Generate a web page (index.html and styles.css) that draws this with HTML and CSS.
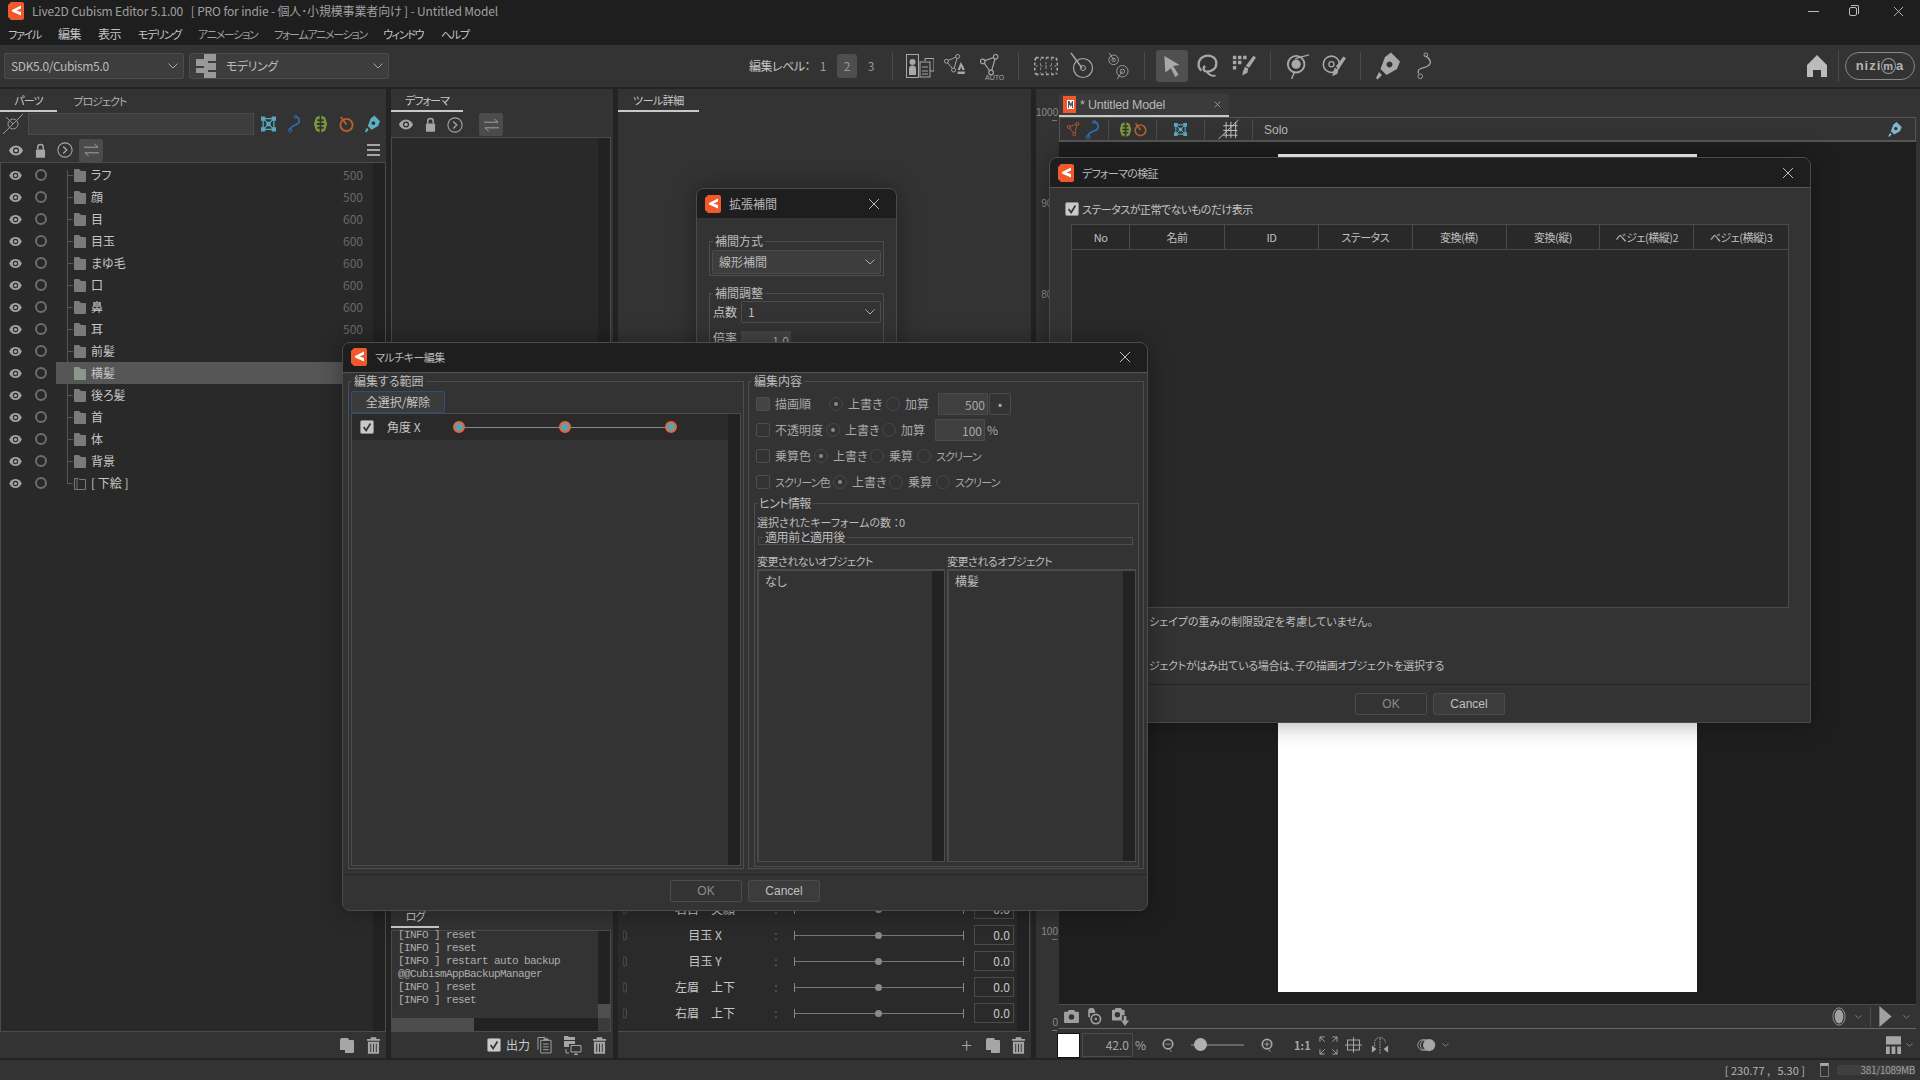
FILE: index.html

```html
<!DOCTYPE html>
<html lang="ja">
<head>
<title>Live2D Cubism Editor</title>
<meta charset="utf-8"/>
<link rel="stylesheet" href="styles.css">
</head>
<body>

<!-- icon set -->
<svg class="defs" xmlns="http://www.w3.org/2000/svg">
  <symbol id="i-logo" viewBox="0 0 16 18"><path fill="#f0592b" d="M3 0h11a2 2 0 0 1 2 2v14a2 2 0 0 1-2 2H3l-3-3V3z"/><path fill="#fff" d="M13 3.500v3L8.500 8.500 13 10v3.500L4 9.500V8z"/></symbol>
  <symbol id="i-doclogo" viewBox="0 0 13 17"><path fill="#f0592b" d="M0 0h13v17H0z"/><path fill="#fff" d="M4 4h7v9H4z"/><path fill="#555" d="M5 5h1.500L8 8l1-3h1v7H9V8.500L8 11 6 8.500V12H5z"/></symbol>
  <symbol id="i-x" viewBox="0 0 12 12"><path fill="none" stroke="currentColor" d="M1 1l10 10M11 1L1 11"/></symbol>
  <symbol id="i-chev" viewBox="0 0 10 6"><path fill="none" stroke="currentColor" d="M.5.5L5 5 9.500.5"/></symbol>
  <symbol id="i-eye" viewBox="0 0 14 10"><path fill="currentColor" d="M7 0c3.400 0 5.800 2.400 7 5-1.200 2.600-3.600 5-7 5S1.200 7.600 0 5c1.200-2.600 3.600-5 7-5z"/><circle cx="7" cy="5" r="3" fill="#2a2a2a"/><circle cx="7" cy="5" r="1.800" fill="currentColor"/></symbol>
  <symbol id="i-lock" viewBox="0 0 12 16"><path fill="none" stroke="currentColor" stroke-width="1.600" d="M3 7V4.500a3 3 0 0 1 6 0V7"/><rect x="1" y="7" width="10" height="9" rx="1" fill="currentColor"/></symbol>
  <symbol id="i-next" viewBox="0 0 18 18"><circle cx="9" cy="9" r="8" fill="none" stroke="currentColor" stroke-width="1.200"/><path fill="none" stroke="currentColor" stroke-width="1.500" d="M7 5l4 4-4 4"/></symbol>
  <symbol id="i-swap" viewBox="0 0 16 14"><path fill="none" stroke="currentColor" d="M0 4h15M11 .5L15 4M16 10H1M5 13.500L1 10"/></symbol>
  <symbol id="i-menu" viewBox="0 0 13 12"><path fill="none" stroke="currentColor" stroke-width="2" d="M0 1h13M0 6h13M0 11h13"/></symbol>
  <symbol id="i-folder" viewBox="0 0 12 13"><path fill="currentColor" d="M1 0h4l2 2h4a1 1 0 0 1 1 1v9a1 1 0 0 1-1 1H1a1 1 0 0 1-1-1V1a1 1 0 0 1 1-1z"/></symbol>
  <symbol id="i-folder-o" viewBox="0 0 12 13"><path fill="none" stroke="currentColor" d="M.5 1.500h4l1 1h6v10H.5zM3 2v10"/></symbol>
  <symbol id="i-trash" viewBox="0 0 14 18"><path fill="currentColor" d="M4 0h6v2h4v2H0V2h4zM1 5h12v13H1zM3.500 7v9h1V7zm3 0v9h1V7zm3 0v9h1V7z"/></symbol>
  <symbol id="i-copy" viewBox="0 0 14 15"><path fill="currentColor" d="M2 0h6l1 2h4a1 1 0 0 1 1 1v11a1 1 0 0 1-1 1H5v-3H0V2a2 2 0 0 1 2-2z"/></symbol>
  <symbol id="i-meshbox" viewBox="0 0 14 14"><g fill="none" stroke="currentColor"><rect x="2" y="2" width="10" height="10" stroke-width="1.200"/><path d="M2 2l10 10M12 2L2 12"/></g><path fill="currentColor" d="M0 0h4v4H0zM10 0h4v4h-4zM0 10h4v4H0zM10 10h4v4h-4zM5 5h4v4H5z"/></symbol>
  <symbol id="i-curve" viewBox="0 0 16 20"><path fill="none" stroke="currentColor" stroke-width="1.800" d="M3 17c0-4 3-5 6-6s5-3 4-6-4-3-4-3"/><circle cx="3" cy="17" r="2" fill="none" stroke="currentColor"/><circle cx="9" cy="2" r="1.500" fill="none" stroke="currentColor"/></symbol>
  <symbol id="i-warp" viewBox="0 0 16 18"><path fill="currentColor" d="M7 0L3 2 1 9l2 7 4 2v-4H4.500v-2H7v-2H4V8h3V6H4.500V4H7zM9 0l4 2 2 7-2 7-4 2v-4h2.500v-2H9v-2h3V8H9V6h2.500V4H9z"/></symbol>
  <symbol id="i-rot" viewBox="0 0 16 17"><circle cx="8" cy="9.500" r="6.500" fill="none" stroke="currentColor" stroke-width="2"/><path fill="none" stroke="currentColor" stroke-width="2" d="M2 1l6 8"/></symbol>
  <symbol id="i-pen" viewBox="0 0 16 18"><path fill="currentColor" d="M10 0l6 6-2 5-7 4-4-4 3-8zM9 6a2 2 0 1 0 .01 0zM2 13l2 2-3 3-1-1z"/></symbol>
  <symbol id="i-clip" viewBox="0 0 8 14"><path fill="none" stroke="currentColor" stroke-width="1.500" d="M2 1h1a3 3 0 0 1 3 3v6a3 3 0 0 1-3 3H2"/><path fill="none" stroke="currentColor" d="M2 1v12"/></symbol>
  <symbol id="i-list" viewBox="0 0 16 18"><path fill="none" stroke="currentColor" d="M1 14V1h8M4 4h11v13.500H4zM6.500 8h6M6.500 11h6M6.500 14h6"/><path fill="currentColor" d="M7 2h5v2H7z"/></symbol>
  <symbol id="i-pc" viewBox="0 0 18 19"><path fill="currentColor" d="M0 0h4l1 1h6v3H0zM0 5h11v3H5v3H0z"/><path fill="none" stroke="currentColor" d="M7 9.500h10v6.500H7zM10 18.500h4M12 16v2M2 13v4h3"/></symbol>
  <symbol id="i-parts" viewBox="0 0 28 24"><g fill="none" stroke="currentColor"><rect x=".5" y=".5" width="12" height="23"/><rect x="14" y="8" width="10" height="15"/><path d="M19 7V4.500h9V17h-4M16 13h6M16 17h6M16 20h6"/></g><circle cx="6.500" cy="8" r="3" fill="currentColor"/><path fill="currentColor" d="M3 21v-6a3.500 3.500 0 0 1 7 0v6z"/></symbol>
  <symbol id="i-tri" viewBox="0 0 26 26"><g fill="none" stroke="currentColor" stroke-width="1.200"><path d="M3 8L17 3l-5 17z"/><circle cx="3" cy="8" r="2.500" fill="#333"/><circle cx="17" cy="3" r="2.500" fill="#333"/><circle cx="12" cy="20" r="2.500" fill="#333"/></g></symbol>
  <symbol id="i-meshpen" viewBox="0 0 30 30"><g fill="none" stroke="currentColor" stroke-width="1.200"><path d="M3 9L17 3l-5 17z"/><circle cx="3" cy="9" r="2.500" fill="#333"/><circle cx="17" cy="3" r="2.500" fill="#333"/><circle cx="12" cy="20" r="2.500" fill="#333"/></g><path fill="currentColor" d="M21 10l3 5 2 5h-3l-1-4-1 4v-4l-1 4h-3l2-5zM17 22h9v3h-9z"/></symbol>
  <symbol id="i-dgrid" viewBox="0 0 26 24"><g fill="none" stroke="currentColor" stroke-width="2" stroke-dasharray="3 2.500"><path d="M2 3h22M2 21h22M2 3c-2 6-2 12 0 18M24 3c2 6 2 12 0 18"/></g><path fill="none" stroke="currentColor" d="M13 3v18M2 12h22M7 4v16M19 4v16" stroke-dasharray="2 3"/></symbol>
  <symbol id="i-rotd" viewBox="0 0 24 28"><circle cx="13" cy="16" r="9.500" fill="none" stroke="currentColor" stroke-width="1.200"/><circle cx="13" cy="16" r="2.500" fill="none" stroke="currentColor"/><path fill="none" stroke="currentColor" stroke-width="1.400" d="M1 1l11 15"/></symbol>
  <symbol id="i-rotd2" viewBox="0 0 26 32"><g fill="none" stroke="currentColor"><circle cx="8" cy="9" r="5.500"/><circle cx="8" cy="9" r="2"/><circle cx="18" cy="22" r="6.500"/><circle cx="18" cy="22" r="2.500"/><path d="M3 1l5 8M18 22l-6 9"/></g></symbol>
  <symbol id="i-arrow" viewBox="0 0 16 20"><path fill="currentColor" d="M1 1l14 8-6 1 5 8-3 2-4-8-5 4z"/></symbol>
  <symbol id="i-swirl" viewBox="0 0 26 28"><path fill="none" stroke="currentColor" stroke-width="2.500" d="M6 19c-5-4-4-12 2-15s14 0 14 7-6 9-10 9-5-4-2-6"/><path fill="none" stroke="currentColor" stroke-width="2" d="M12 21c2 2 6 5 9 3"/></symbol>
  <symbol id="i-brush" viewBox="0 0 28 26"><path fill="currentColor" d="M1 1h4v4H1zM7 1h4v4H7zM13 1h4v4h-4zM1 7h4v4H1zM7 7h4v4H7zM1 13h4v4H1zM25 1l3 2-8 12-4-2zM15 14l4 2-1 5-6 3 1-5z"/></symbol>
  <symbol id="i-rotline" viewBox="0 0 26 30"><circle cx="11" cy="13" r="9" fill="none" stroke="currentColor" stroke-width="2"/><circle cx="11" cy="13" r="5" fill="currentColor"/><path fill="none" stroke="currentColor" stroke-width="1.500" d="M10 7l15-4M9 22L6 29"/></symbol>
  <symbol id="i-rotbrush" viewBox="0 0 28 30"><circle cx="11" cy="13" r="9.500" fill="none" stroke="currentColor" stroke-width="1.800"/><circle cx="11" cy="13" r="3" fill="none" stroke="currentColor" stroke-width="1.500"/><path fill="currentColor" d="M25 4l3 2-8 12-4-2zM15 17l4 2-1 5-6 3 1-5z"/></symbol>
  <symbol id="i-curve2" viewBox="0 0 22 30"><path fill="none" stroke="currentColor" stroke-width="1.400" d="M12 4c6 3 8 8 3 11S3 17 5 23"/><circle cx="13" cy="3" r="2" fill="none" stroke="currentColor"/><circle cx="7" cy="26" r="2.500" fill="none" stroke="currentColor"/></symbol>
  <symbol id="i-home" viewBox="0 0 20 22"><path fill="currentColor" d="M10 0l10 10v12h-6v-7H6v7H0V10z"/></symbol>
  <symbol id="i-nogrid" viewBox="0 0 22 22"><path fill="none" stroke="currentColor" d="M5 7h15M5 12h15M5 17h15M8 3v17M13 3v17M18 3v17M0 21L21 1"/></symbol>
  <symbol id="i-cam" viewBox="0 0 16 14"><path fill="currentColor" d="M5 0h6l1 2h3a1 1 0 0 1 1 1v10a1 1 0 0 1-1 1H1a1 1 0 0 1-1-1V3a1 1 0 0 1 1-1h3z"/><circle cx="8" cy="7.500" r="3" fill="#333"/></symbol>
  <symbol id="i-camrot" viewBox="0 0 16 20"><path fill="currentColor" d="M2 0h4l1 2h1v4H2v5H0V2z"/><circle cx="9" cy="13" r="5.500" fill="none" stroke="currentColor" stroke-width="2"/><circle cx="9" cy="13" r="1.500" fill="currentColor"/></symbol>
  <symbol id="i-camdown" viewBox="0 0 20 20"><path fill="currentColor" d="M4 0h6l1 2h2a1 1 0 0 1 1 1v5h-3v6H1a1 1 0 0 1-1-1V3a1 1 0 0 1 1-1h2z"/><circle cx="6" cy="7.500" r="3" fill="#333"/><path fill="currentColor" d="M13 9h3v5h3l-4.500 6L10 14h3z"/></symbol>
  <symbol id="i-play" viewBox="0 0 14 24"><path fill="currentColor" d="M0 0l14 12L0 24z"/></symbol>
  <symbol id="i-ring" viewBox="0 0 16 22"><ellipse cx="8" cy="11" rx="7" ry="10" fill="none" stroke="currentColor"/><ellipse cx="8" cy="11" rx="5" ry="8" fill="currentColor"/></symbol>
  <symbol id="i-zminus" viewBox="0 0 14 16"><circle cx="7" cy="7" r="5.500" fill="none" stroke="currentColor" stroke-width="2"/><path fill="none" stroke="currentColor" d="M4 7h6M9 13l2 3"/></symbol>
  <symbol id="i-zplus" viewBox="0 0 14 16"><circle cx="7" cy="7" r="5.500" fill="none" stroke="currentColor" stroke-width="2"/><path fill="none" stroke="currentColor" d="M4 7h6M7 4v6M9 13l2 3"/></symbol>
  <symbol id="i-fit" viewBox="0 0 20 20"><path fill="none" stroke="currentColor" d="M1 6V1h5M1 1l5 5M19 6V1h-5M19 1l-5 5M1 14v5h5M1 19l5-5M19 14v5h-5M19 19l-5-5"/></symbol>
  <symbol id="i-cross" viewBox="0 0 20 18"><path fill="none" stroke="currentColor" stroke-width="1.200" d="M3 3h14v12H3zM0 9h20M10 0v18"/></symbol>
  <symbol id="i-flip" viewBox="0 0 20 18"><path fill="none" stroke="currentColor" d="M4 10V6a6 6 0 0 1 12 0M10 1v17" stroke-dasharray="2 1"/><path fill="currentColor" d="M1 9l5 4-5 4zM19 9l-5 4 5 4z"/></symbol>
  <symbol id="i-blend" viewBox="0 0 20 16"><circle cx="6" cy="8" r="6" fill="none" stroke="currentColor"/><circle cx="9" cy="8" r="6" fill="none" stroke="currentColor"/><circle cx="13" cy="8" r="7" fill="currentColor"/></symbol>
  <symbol id="i-layout" viewBox="0 0 16 20"><path fill="currentColor" d="M0 0h16v9H0zM0 11h4v8H0zM6 11h4v8H6zM12 11h4v8h-4z"/></symbol>
  <symbol id="i-mem" viewBox="0 0 14 24"><rect x=".5" y=".5" width="13" height="23" fill="none" stroke="currentColor"/><path fill="currentColor" d="M0 0h14v5H0z"/></symbol>
  <symbol id="i-nopen" viewBox="0 0 22 22"><circle cx="11" cy="11" r="5" fill="none" stroke="currentColor"/><path fill="none" stroke="currentColor" d="M1 21L21 1M4 4l7 7"/></symbol>
  <symbol id="i-check" viewBox="0 0 14 14"><path fill="none" stroke="currentColor" stroke-width="2" d="M3 7l3 4 5-8"/></symbol>
</svg>

<div class="app">

  <div class="titlebar">
    <svg class="logo"><use href="#i-logo"/></svg>
    <span class="title-text">Live2D Cubism Editor 5.1.00   [ PRO for indie - 個人･小規模事業者向け ] - Untitled Model</span>
    <div class="win-btns">
      <span class="win-min"></span>
      <span class="win-max"></span>
      <svg class="win-close"><use href="#i-x"/></svg>
    </div>
  </div>

  <div class="menubar">
    <span class="m1">ファイル</span>
    <span class="m2">編集</span>
    <span class="m3">表示</span>
    <span class="m4">モデリング</span>
    <span class="m5">アニメーション</span>
    <span class="m6">フォームアニメーション</span>
    <span class="m7">ウィンドウ</span>
    <span class="m8">ヘルプ</span>
  </div>

  <div class="toolbar">
    <div class="select sel-sdk"><span>SDK5.0/Cubism5.0</span><svg class="chev"><use href="#i-chev"/></svg></div>
    <div class="select sel-mode">
      <svg class="mode-ic" viewBox="0 0 20 24"><path fill="currentColor" d="M8 0h12v7H8zM0 5h12v7H0zM8 9h12v7H8zM0 14h12v5H0zM8 18h12v6H8z"/></svg>
      <span>モデリング</span><svg class="chev"><use href="#i-chev"/></svg>
    </div>
    <div class="level">
      <span class="level-lbl">編集レベル：</span>
      <span class="level-n">1</span>
      <span class="level-n level-on">2</span>
      <span class="level-n">3</span>
    </div>
    <span class="tb-sep"></span>
    <div class="tb-btn"><svg class="ic28"><use href="#i-parts"/></svg></div>
    <div class="tb-btn"><svg class="ic28"><use href="#i-meshpen"/></svg></div>
    <div class="tb-btn tb-auto"><svg class="ic24"><use href="#i-tri"/></svg><em>AUTO</em></div>
    <span class="tb-sep"></span>
    <div class="tb-btn"><svg class="ic24"><use href="#i-dgrid"/></svg></div>
    <div class="tb-btn"><svg class="ic24 tall"><use href="#i-rotd"/></svg></div>
    <div class="tb-btn"><svg class="ic24 tall"><use href="#i-rotd2"/></svg></div>
    <span class="tb-sep"></span>
    <div class="tb-btn tb-on"><svg class="ic20"><use href="#i-arrow"/></svg></div>
    <div class="tb-btn"><svg class="ic24 tall"><use href="#i-swirl"/></svg></div>
    <div class="tb-btn"><svg class="ic24 tall"><use href="#i-brush"/></svg></div>
    <span class="tb-sep"></span>
    <div class="tb-btn"><svg class="ic24 tall"><use href="#i-rotline"/></svg></div>
    <div class="tb-btn"><svg class="ic24 tall"><use href="#i-rotbrush"/></svg></div>
    <span class="tb-sep"></span>
    <div class="tb-btn"><svg class="ic24 tall"><use href="#i-pen"/></svg></div>
    <div class="tb-btn"><svg class="ic24 tall"><use href="#i-curve2"/></svg></div>
    <div class="tb-btn tb-home"><svg class="ic20"><use href="#i-home"/></svg></div>
    <span class="tb-sep tb-sep-tall"></span>
    <div class="nizima">nizi<span class="nizima-m">m</span>a</div>
  </div>

  <div class="workspace">

    <!-- parts panel -->
    <div class="panel col-parts">
      <div class="tabs">
        <span class="tab tab-on tab-parts">パーツ</span>
        <span class="tab tab-proj">プロジェクト</span>
      </div>
      <div class="search-row">
        <svg class="nopen"><use href="#i-nopen"/></svg>
        <div class="search-box"></div>
        <svg class="filter c-teal"><use href="#i-meshbox"/></svg>
        <svg class="filter c-blue"><use href="#i-curve"/></svg>
        <svg class="filter c-green"><use href="#i-warp"/></svg>
        <svg class="filter c-orange"><use href="#i-rot"/></svg>
        <svg class="filter c-teal2"><use href="#i-pen"/></svg>
      </div>
      <div class="head-row">
        <svg class="h-eye"><use href="#i-eye"/></svg>
        <svg class="h-lock"><use href="#i-lock"/></svg>
        <svg class="h-next"><use href="#i-next"/></svg>
        <span class="swap-btn"><svg><use href="#i-swap"/></svg></span>
        <svg class="h-menu"><use href="#i-menu"/></svg>
      </div>
      <div class="tree">
        <div class="tree-list">
          <div class="t-row"><svg class="t-eye"><use href="#i-eye"/></svg><span class="t-dot"></span><div class="t-main"><svg class="t-folder"><use href="#i-folder"/></svg><span class="t-name">ラフ</span><span class="t-num">500</span></div></div>
          <div class="t-row"><svg class="t-eye"><use href="#i-eye"/></svg><span class="t-dot"></span><div class="t-main"><svg class="t-folder"><use href="#i-folder"/></svg><span class="t-name">顔</span><span class="t-num">500</span></div></div>
          <div class="t-row"><svg class="t-eye"><use href="#i-eye"/></svg><span class="t-dot"></span><div class="t-main"><svg class="t-folder"><use href="#i-folder"/></svg><span class="t-name">目</span><span class="t-num">600</span></div></div>
          <div class="t-row"><svg class="t-eye"><use href="#i-eye"/></svg><span class="t-dot"></span><div class="t-main"><svg class="t-folder"><use href="#i-folder"/></svg><span class="t-name">目玉</span><span class="t-num">600</span></div></div>
          <div class="t-row"><svg class="t-eye"><use href="#i-eye"/></svg><span class="t-dot"></span><div class="t-main"><svg class="t-folder"><use href="#i-folder"/></svg><span class="t-name">まゆ毛</span><span class="t-num">600</span></div></div>
          <div class="t-row"><svg class="t-eye"><use href="#i-eye"/></svg><span class="t-dot"></span><div class="t-main"><svg class="t-folder"><use href="#i-folder"/></svg><span class="t-name">口</span><span class="t-num">600</span></div></div>
          <div class="t-row"><svg class="t-eye"><use href="#i-eye"/></svg><span class="t-dot"></span><div class="t-main"><svg class="t-folder"><use href="#i-folder"/></svg><span class="t-name">鼻</span><span class="t-num">600</span></div></div>
          <div class="t-row"><svg class="t-eye"><use href="#i-eye"/></svg><span class="t-dot"></span><div class="t-main"><svg class="t-folder"><use href="#i-folder"/></svg><span class="t-name">耳</span><span class="t-num">500</span></div></div>
          <div class="t-row"><svg class="t-eye"><use href="#i-eye"/></svg><span class="t-dot"></span><div class="t-main"><svg class="t-folder"><use href="#i-folder"/></svg><span class="t-name">前髪</span></div></div>
          <div class="t-row"><svg class="t-eye"><use href="#i-eye"/></svg><span class="t-dot"></span><div class="t-main t-sel"><svg class="t-folder"><use href="#i-folder"/></svg><span class="t-name">横髪</span></div></div>
          <div class="t-row"><svg class="t-eye"><use href="#i-eye"/></svg><span class="t-dot"></span><div class="t-main"><svg class="t-folder"><use href="#i-folder"/></svg><span class="t-name">後ろ髪</span></div></div>
          <div class="t-row"><svg class="t-eye"><use href="#i-eye"/></svg><span class="t-dot"></span><div class="t-main"><svg class="t-folder"><use href="#i-folder"/></svg><span class="t-name">首</span></div></div>
          <div class="t-row"><svg class="t-eye"><use href="#i-eye"/></svg><span class="t-dot"></span><div class="t-main"><svg class="t-folder"><use href="#i-folder"/></svg><span class="t-name">体</span></div></div>
          <div class="t-row"><svg class="t-eye"><use href="#i-eye"/></svg><span class="t-dot"></span><div class="t-main"><svg class="t-folder"><use href="#i-folder"/></svg><span class="t-name">背景</span></div></div>
          <div class="t-row"><svg class="t-eye"><use href="#i-eye"/></svg><span class="t-dot"></span><div class="t-main t-last"><svg class="t-folder t-outline"><use href="#i-folder-o"/></svg><span class="t-name">[ 下絵 ]</span></div></div>
        </div>
        <div class="vscroll"></div>
      </div>
      <div class="foot">
        <svg class="f-copy"><use href="#i-copy"/></svg>
        <svg class="f-trash"><use href="#i-trash"/></svg>
      </div>
    </div>

    <!-- deformer + log -->
    <div class="col-deform">
      <div class="panel deform">
        <div class="tabs"><span class="tab tab-on tab-def">デフォーマ</span></div>
        <div class="head-row head-def">
          <svg class="h-eye"><use href="#i-eye"/></svg>
          <svg class="h-lock"><use href="#i-lock"/></svg>
          <svg class="h-next"><use href="#i-next"/></svg>
          <span class="swap-btn"><svg><use href="#i-swap"/></svg></span>
        </div>
        <div class="tree tree-def"><div class="tree-list"></div><div class="vscroll"></div></div>
      </div>
      <div class="panel logp">
        <div class="tabs"><span class="tab tab-on tab-log">ログ</span></div>
        <div class="logbox">
          <div class="log-top">
            <div class="log-text">[INFO ] reset
[INFO ] reset
[INFO ] restart auto backup
@@CubismAppBackupManager
[INFO ] reset
[INFO ] reset</div>
            <div class="log-v"><span></span></div>
          </div>
          <div class="log-h"><span class="log-thumb"></span><span class="log-corner"></span></div>
        </div>
        <div class="foot foot-log">
          <span class="cb cb-on"><svg><use href="#i-check"/></svg></span>
          <span class="out-lbl">出力</span>
          <svg class="f-list"><use href="#i-list"/></svg>
          <svg class="f-pc"><use href="#i-pc"/></svg>
          <svg class="f-trash"><use href="#i-trash"/></svg>
        </div>
      </div>
    </div>

    <!-- tool details + parameters -->
    <div class="col-tool">
      <div class="panel tool">
        <div class="tabs"><span class="tab tab-on tab-tool">ツール詳細</span></div>
      </div>
      <div class="panel params">
        <div class="param-list">
          <div class="param-rows">
            <div class="p-row"><svg class="p-clip"><use href="#i-clip"/></svg><span class="p-name">右目　笑顔</span><span class="p-colon">:</span><div class="p-slider"><span></span></div><span class="p-val">0.0</span></div>
            <div class="p-row"><svg class="p-clip"><use href="#i-clip"/></svg><span class="p-name">目玉 X</span><span class="p-colon">:</span><div class="p-slider"><span></span></div><span class="p-val">0.0</span></div>
            <div class="p-row"><svg class="p-clip"><use href="#i-clip"/></svg><span class="p-name">目玉 Y</span><span class="p-colon">:</span><div class="p-slider"><span></span></div><span class="p-val">0.0</span></div>
            <div class="p-row"><svg class="p-clip"><use href="#i-clip"/></svg><span class="p-name">左眉　上下</span><span class="p-colon">:</span><div class="p-slider"><span></span></div><span class="p-val">0.0</span></div>
            <div class="p-row"><svg class="p-clip"><use href="#i-clip"/></svg><span class="p-name">右眉　上下</span><span class="p-colon">:</span><div class="p-slider"><span></span></div><span class="p-val">0.0</span></div>
          </div>
          <div class="vscroll"></div>
        </div>
        <div class="foot foot-param">
          <span class="f-plus">+</span>
          <svg class="f-copy"><use href="#i-copy"/></svg>
          <svg class="f-trash"><use href="#i-trash"/></svg>
        </div>
      </div>
    </div>

    <!-- canvas -->
    <div class="panel col-canvas">
      <div class="canvas-main">
        <div class="ruler">
          <div class="tick">1000</div><div class="tick">900</div><div class="tick">800</div>
          <div class="tick"></div><div class="tick"></div><div class="tick"></div>
          <div class="tick"></div><div class="tick"></div><div class="tick"></div>
          <div class="tick">100</div><div class="tick">0</div>
        </div>
        <div class="viewport">
          <div class="doc-tabs">
            <div class="doc-tab">
              <svg class="doc-logo"><use href="#i-doclogo"/></svg>
              <span class="doc-name">* Untitled Model</span>
              <svg class="doc-x"><use href="#i-x"/></svg>
            </div>
          </div>
          <div class="doc-tools">
            <div class="dt-cell dt-a"><svg class="dt-ic c-orange2"><use href="#i-tri"/></svg><svg class="dt-ic c-blue"><use href="#i-curve"/></svg></div>
            <div class="dt-cell"><svg class="dt-sm c-green"><use href="#i-warp"/></svg><svg class="dt-sm c-orange"><use href="#i-rot"/></svg></div>
            <div class="dt-cell"><svg class="dt-sm c-teal"><use href="#i-meshbox"/></svg></div>
            <div class="dt-cell"><svg class="dt-grid"><use href="#i-nogrid"/></svg></div>
            <span class="dt-solo">Solo</span>
            <svg class="dt-pen c-teal3"><use href="#i-pen"/></svg>
          </div>
          <div class="stage"><div class="artboard"></div></div>
          <div class="stage-foot">
            <svg class="sf-ic"><use href="#i-cam"/></svg>
            <svg class="sf-ic sf-tall"><use href="#i-camrot"/></svg>
            <svg class="sf-ic sf-wide"><use href="#i-camdown"/></svg>
            <svg class="sf-ring"><use href="#i-ring"/></svg>
            <svg class="sf-chev"><use href="#i-chev"/></svg>
            <span class="sf-sep"></span>
            <svg class="sf-play"><use href="#i-play"/></svg>
            <svg class="sf-chev sf-chev2"><use href="#i-chev"/></svg>
          </div>
        </div>
      </div>
      <div class="zoom-row">
        <span class="swatch"></span>
        <span class="zoom-val">42.0</span><span class="zoom-pct">%</span>
        <svg class="z-minus"><use href="#i-zminus"/></svg>
        <div class="z-slider"><span></span></div>
        <svg class="z-plus"><use href="#i-zplus"/></svg>
        <span class="z-11">1:1</span>
        <svg class="z-fit"><use href="#i-fit"/></svg>
        <svg class="z-cross"><use href="#i-cross"/></svg>
        <svg class="z-flip"><use href="#i-flip"/></svg>
        <svg class="z-blend"><use href="#i-blend"/></svg>
        <svg class="z-chev"><use href="#i-chev"/></svg>
        <svg class="z-layout"><use href="#i-layout"/></svg>
        <svg class="z-chev z-chev2"><use href="#i-chev"/></svg>
      </div>
    </div>
  </div>

  <div class="statusbar">
    <span class="coords">[ 230.77 ,   5.30 ]</span>
    <svg class="st-mem"><use href="#i-mem"/></svg>
    <span class="mem">381/1089MB</span>
  </div>
</div>

<!-- extended interpolation dialog -->
<div class="dialog dlg-interp">
  <div class="dlg-title">
    <svg class="logo"><use href="#i-logo"/></svg>
    <span class="dlg-name">拡張補間</span>
    <svg class="dlg-x"><use href="#i-x"/></svg>
  </div>
  <div class="interp-body">
    <fieldset class="fs fs-method">
      <legend>補間方式</legend>
      <div class="select sel-interp"><span>線形補間</span><svg class="chev"><use href="#i-chev"/></svg></div>
    </fieldset>
    <fieldset class="fs fs-adjust">
      <legend>補間調整</legend>
      <div class="adj-row"><span class="adj-lbl">点数</span><div class="select sel-points"><span>1</span><svg class="chev"><use href="#i-chev"/></svg></div></div>
      <div class="adj-row adj-rate"><span class="adj-lbl">倍率</span><span class="rate-val">1.0</span></div>
    </fieldset>
  </div>
</div>

<!-- deformer check dialog -->
<div class="dialog dlg-check">
  <div class="dlg-title">
    <svg class="logo"><use href="#i-logo"/></svg>
    <span class="dlg-name">デフォーマの検証</span>
    <svg class="dlg-x"><use href="#i-x"/></svg>
  </div>
  <div class="check-body">
    <div class="check-opt"><span class="cb cb-on"><svg><use href="#i-check"/></svg></span><span class="check-lbl">ステータスが正常でないものだけ表示</span></div>
    <div class="check-table">
      <div class="ct-head">
        <span class="ct-no">No</span><span class="ct-name">名前</span><span>ID</span><span>ステータス</span>
        <span>変換(横)</span><span>変換(縦)</span><span>ベジェ(横縦)2</span><span>ベジェ(横縦)3</span>
      </div>
    </div>
    <p class="check-note note-1">シェイプの重みの制限設定を考慮していません。</p>
    <p class="check-note note-2">ジェクトがはみ出ている場合は、子の描画オブジェクトを選択する</p>
  </div>
  <div class="dlg-foot check-foot">
    <span class="btn btn-dim">OK</span>
    <span class="btn">Cancel</span>
  </div>
</div>

<!-- multi key edit dialog -->
<div class="dialog dlg-multi">
  <div class="dlg-title">
    <svg class="logo"><use href="#i-logo"/></svg>
    <span class="dlg-name">マルチキー編集</span>
    <svg class="dlg-x"><use href="#i-x"/></svg>
  </div>
  <div class="multi-body">
    <fieldset class="fs fs-range">
      <legend>編集する範囲</legend>
      <span class="all-btn">全選択/解除</span>
      <div class="range-list">
        <div class="range-rows">
          <div class="range-row">
            <span class="cb cb-on"><svg><use href="#i-check"/></svg></span>
            <span class="range-name">角度 X</span>
            <div class="keys"><span class="key"></span><span class="key"></span><span class="key"></span></div>
          </div>
        </div>
        <div class="vscroll"></div>
      </div>
    </fieldset>
    <fieldset class="fs fs-content">
      <legend>編集内容</legend>
      <div class="opt-row">
        <span class="cb cb-tex"></span><span class="opt-lbl w54">描画順</span>
        <span class="radio-item w57"><i class="radio radio-on"></i>上書き</span>
        <span class="radio-item w52"><i class="radio"></i>加算</span>
        <span class="num-box w50">500</span><span class="spin">•</span>
      </div>
      <div class="opt-row">
        <span class="cb"></span><span class="opt-lbl w51">不透明度</span>
        <span class="radio-item w56"><i class="radio radio-on"></i>上書き</span>
        <span class="radio-item w53"><i class="radio"></i>加算</span>
        <span class="num-box w50">100</span><span class="pct">%</span>
      </div>
      <div class="opt-row">
        <span class="cb"></span><span class="opt-lbl w39">乗算色</span>
        <span class="radio-item w56"><i class="radio radio-on"></i>上書き</span>
        <span class="radio-item w47"><i class="radio"></i>乗算</span>
        <span class="radio-item r-kana"><i class="radio"></i>スクリーン</span>
      </div>
      <div class="opt-row opt-last">
        <span class="cb"></span><span class="opt-lbl w58 r-kana">スクリーン色</span>
        <span class="radio-item w56"><i class="radio radio-on"></i>上書き</span>
        <span class="radio-item w47"><i class="radio"></i>乗算</span>
        <span class="radio-item r-kana"><i class="radio"></i>スクリーン</span>
      </div>
      <fieldset class="fs fs-hint">
        <legend>ヒント情報</legend>
        <div class="hint-count">選択されたキーフォームの数 ：0</div>
        <fieldset class="fs fs-before"><legend>適用前と適用後</legend></fieldset>
        <div class="obj-cols">
          <div class="obj-col">
            <div class="obj-lbl">変更されないオブジェクト</div>
            <div class="obj-list"><div class="obj-items">なし</div><div class="vscroll"></div></div>
          </div>
          <div class="obj-col">
            <div class="obj-lbl">変更されるオブジェクト</div>
            <div class="obj-list"><div class="obj-items">横髪</div><div class="vscroll"></div></div>
          </div>
        </div>
      </fieldset>
    </fieldset>
  </div>
  <div class="dlg-foot multi-foot">
    <span class="btn btn-dim">OK</span>
    <span class="btn">Cancel</span>
  </div>
</div>

</body>
</html>
```

FILE: styles.css

```css
* { box-sizing: border-box; }
html, body { margin: 0; padding: 0; }
body {
    width: 1920px;
    height: 1080px;
    overflow: hidden;
    position: relative;
    background-color: #232323;
    color: #c4c4c4;
    font-family: "Noto Sans CJK JP", "Noto Sans", sans-serif;
    font-size: 12px;
    line-height: 14px;
    font-feature-settings: "palt";
}
.defs { display: none; }
svg { display: block; flex: none; }

.app { display: flex; flex-direction: column; height: 1080px; }

/* title + menu */
.titlebar { height: 22px; background-color: #1e1e1e; display: flex; align-items: center; padding-left: 8px; }
.logo { width: 16px; height: 18px; }
.title-text { margin-left: 8px; color: #a0a0a0; white-space: pre; letter-spacing: -.15px; }
.win-btns { margin-left: auto; display: flex; align-items: center; }
.win-min { width: 11px; height: 1px; background-color: #bbb; margin-right: 30px; }
.win-max { width: 8px; height: 9px; border: 1px solid #bbb; border-radius: 2px; margin-right: 36px; position: relative; }
.win-max::after { content: ""; position: absolute; left: 1px; top: -3px; width: 7px; height: 8px; border: 1px solid #bbb; border-left: 0; border-bottom: 0; border-radius: 0 2px 0 0; }
.win-close { width: 11px; height: 11px; color: #bbb; margin-right: 16px; }

.menubar { height: 23px; background-color: #1e1e1e; display: flex; align-items: center; white-space: nowrap; font-size: 11px; letter-spacing: -1.3px; }
.menubar span { flex: none; }
.menubar .m2, .menubar .m3 { font-size: 12px; letter-spacing: -.4px; }
.m1 { margin-left: 8px; width: 50px; }
.m2 { width: 40px; }
.m3 { width: 40px; }
.m4 { width: 60px; }
.m5 { width: 76px; color: #a0a0a0; }
.m6 { width: 109px; color: #a0a0a0; }
.m7 { width: 58px; }

/* toolbar */
.toolbar { height: 42px; background-color: #333; display: flex; align-items: center; padding: 0 5px 0 4px; flex: none; }
.select { height: 26px; background-color: #3d3d3d; border: 1px solid #4c4c4c; border-radius: 2px; display: flex; align-items: center; padding: 0 5px 0 6px; color: #bbb; }
.chev { width: 10px; height: 6px; margin-left: auto; color: #aaa; }
.sel-sdk { width: 180px; letter-spacing: -.35px; }
.sel-mode { width: 200px; margin-left: 5px; letter-spacing: -.5px; }
.mode-ic { width: 20px; height: 24px; margin-left: 0; margin-right: 10px; color: #999; }
.level { display: flex; align-items: center; margin-left: 360px; width: 136px; flex: none; }
.level-lbl { width: 64px; flex: none; letter-spacing: -.5px; }
.level-n { width: 20px; height: 24px; margin-right: 4px; display: flex; align-items: center; justify-content: center; color: #999; flex: none; }
.level-on { background-color: #4e4e4e; border-radius: 3px; }
.tb-sep { width: 1px; height: 28px; background-color: #494949; margin: 0 9px 0 7px; flex: none; }
.tb-sep ~ .tb-sep { margin: 0 9px 0 8px; }
.tb-btn { width: 36px; height: 32px; display: flex; align-items: center; justify-content: center; color: #a8a8a8; flex: none; position: relative; }
.tb-on { background-color: #505050; border-radius: 3px; width: 32px; margin: 0 2px; }
.tb-auto em { position: absolute; bottom: 0; left: 11px; font-size: 7px; line-height: 8px; font-style: normal; font-family: "Liberation Sans", sans-serif; }
.ic28 { width: 28px; height: 24px; }
.ic24 { width: 24px; height: 24px; }
.ic24.tall { height: 28px; }
.ic20 { width: 20px; height: 22px; }
.tb-home { margin-left: auto; }
.tb-home svg { color: #bbb; }
.toolbar .tb-sep-tall { margin: 0 6px 0 3px; height: 32px; }
.nizima { width: 70px; height: 28px; border: 1px solid #888; border-radius: 14px; display: flex; align-items: center; justify-content: center; font-family: "Liberation Sans", sans-serif; font-size: 13px; font-weight: bold; color: #b4b4b4; letter-spacing: 1px; }
.nizima-m { border: 1px solid #999; border-radius: 50%; padding: 0 1px; font-size: 11px; line-height: 14px; }

/* panels */
.workspace { height: 969px; margin-top: 2px; display: flex; gap: 5px; flex: none; }
.panel { background-color: #333; display: flex; flex-direction: column; }
.col-parts { width: 386px; }
.col-deform { width: 222px; display: flex; flex-direction: column; }
.col-tool { width: 413px; display: flex; flex-direction: column; }
.col-canvas { flex: 1; }
.deform { flex: 1; min-height: 0; }
.logp { height: 153px; }
.tool { flex: 1; }
.params { height: 170px; }

.tabs { height: 23px; flex: none; display: flex; position: relative; }
.tab { height: 23px; display: flex; align-items: center; justify-content: center; color: #b0b0b0; font-size: 11px; letter-spacing: -1px; }
.tab-on { border-bottom: 2px solid #c8c8c8; color: #c8c8c8; }
.tab-parts { width: 57px; }
.tab-proj { width: 76px; margin-left: 5px; }
.tab-def { width: 72px; }
.tab-tool { width: 81px; letter-spacing: -.5px; }
.tab-log { width: 48px; }

.search-row { height: 26px; padding-bottom: 2px; display: flex; align-items: center; flex: none; position: relative; }
.nopen { width: 22px; height: 22px; margin-left: 2px; color: #999; }
.search-box { width: 226px; height: 22px; margin-left: 4px; background-color: #3d3d3d; border: 1px solid #4a4a4a; }
.filter { width: 15px; height: 18px; }
.search-box + .filter { margin-left: 7px; }
.filter + .filter { margin-left: 11px; }
.c-teal { color: #58a8bd; }
.c-teal2 { color: #5faec4; }
.c-teal3 { color: #7fb6cc; }
.c-blue { color: #2f6db0; }
.c-green { color: #7d9a3a; }
.c-orange { color: #b5602f; }
.c-orange2 { color: #d9622f; }

.head-row { height: 24px; display: flex; align-items: center; color: #a6a6a6; flex: none; }
.h-eye { width: 14px; height: 11px; margin-left: 9px; }
.h-lock { width: 11px; height: 15px; margin-left: 12px; }
.h-next { width: 16px; height: 16px; margin-left: 11px; }
.swap-btn { width: 24px; height: 23px; margin-left: 6px; background-color: #4b4b4b; border-radius: 2px; display: flex; align-items: center; justify-content: center; }
.swap-btn svg { width: 15px; height: 14px; }
.h-menu { width: 13px; height: 12px; margin-left: auto; margin-right: 6px; }
.head-def { height: 25px; }
.head-def .h-eye { margin-left: 8px; }
.head-def .swap-btn { margin-left: 16px; }

.tree { flex: 1; min-height: 0; display: flex; background-color: #292929; border: 1px solid #4b4b4b; }
.tree-def { margin-right: 2px; }
.tree-list { flex: 1; padding-top: 1px; min-width: 0; }
.vscroll { width: 12px; flex: none; background-color: #222; }

.t-row { height: 22px; display: flex; align-items: center; }
.t-eye { width: 13px; height: 9px; margin-left: 8px; color: #a0a0a0; }
.t-dot { width: 12px; height: 12px; margin-left: 13px; border: 2px solid #6e6e6e; border-radius: 50%; flex: none; }
.t-main { flex: 1; height: 22px; margin-left: 9px; display: flex; align-items: center; padding-left: 18px; position: relative; }
.t-main::before { content: ""; position: absolute; left: 11px; top: -11px; width: 1px; height: 22px; background-color: #555; }
.t-main::after { content: ""; position: absolute; left: 11px; top: 11px; width: 6px; height: 1px; background-color: #555; }
.t-row:first-child .t-main::before { top: 6px; height: 6px; }
.t-sel { background-color: #565656; }
.t-folder { width: 12px; height: 13px; color: #7a7a7a; }
.t-outline { color: #777; }
.t-sel .t-folder { color: #8d968d; }
.t-name { margin-left: 5px; color: #c6c6c6; }
.t-num { margin-left: auto; margin-right: 10px; color: #6d6666; font-size: 12px; }

.foot { height: 26px; flex: none; display: flex; align-items: center; justify-content: flex-end; padding-right: 6px; color: #a6a6a6; }
.f-copy { width: 14px; height: 15px; margin-right: 13px; }
.f-trash { width: 13px; height: 17px; }
.foot-log { padding-right: 7px; }
.out-lbl { margin: 0 7px 0 5px; color: #ccc; }
.f-list { width: 15px; height: 18px; margin-right: 12px; }
.f-pc { width: 18px; height: 19px; margin-right: 11px; }
.f-plus { font-size: 20px; margin-right: 14px; font-weight: 200; }
.foot-param { padding-right: 6px; }
.foot-param .f-copy { margin-right: 12px; }

/* checkbox */
.cb { width: 14px; height: 14px; flex: none; border: 1px solid #4e4e4e; background-color: #333; border-radius: 2px; display: inline-flex; align-items: center; justify-content: center; }
.cb svg { width: 12px; height: 12px; color: #333; }
.cb-on { background-color: #c9c9c9; border-color: #888; }
.cb-tex { background-color: #444; }

/* log */
.logbox { flex: 1; min-height: 0; margin: 2px 2px 0 0; border: 1px solid #4b4b4b; display: flex; flex-direction: column; }
.log-top { flex: 1; min-height: 0; display: flex; }
.log-text { flex: 1; font-family: "Liberation Mono", monospace; font-size: 11px; letter-spacing: -.6px; line-height: 13px; white-space: pre; padding: 0 6px; margin-top: -2px; color: #aeaeae; overflow: hidden; font-feature-settings: normal; }
.log-v { width: 12px; background-color: #222; display: flex; align-items: flex-end; }
.log-v span { display: block; width: 12px; height: 14px; background-color: #4f4f4f; }
.log-h { height: 13px; background-color: #222; display: flex; flex: none; }
.log-thumb { width: 82px; background-color: #4d4d4d; }
.log-corner { width: 12px; margin-left: auto; background-color: #3b3b3b; }

/* parameters */
.param-list { flex: 1; min-height: 0; display: flex; background-color: #2a2a2a; border: 1px solid #4b4b4b; border-left: 0; margin-right: 1px; }
.param-rows { flex: 1; display: flex; flex-direction: column; justify-content: flex-end; padding-bottom: 5px; }
.p-row { height: 26px; flex: none; display: flex; align-items: center; }
.p-clip { width: 6px; height: 13px; margin-left: 4px; color: #4b4b4b; }
.p-name { width: 154px; text-align: center; color: #c6c6c6; white-space: pre; }
.p-colon { width: 20px; margin-left: -16px; text-align: center; color: #666; }
.p-slider { width: 170px; height: 9px; margin-left: 8px; border-left: 1px solid #888; border-right: 1px solid #888; position: relative; }
.p-slider::before { content: ""; position: absolute; left: 0; right: 0; top: 4px; height: 1px; background-color: #777; }
.p-slider span { position: absolute; left: 80px; top: 1px; width: 7px; height: 7px; border-radius: 50%; background-color: #8a8a8a; }
.p-val { width: 40px; height: 20px; margin-left: 10px; border: 1px solid #4b4b4b; text-align: right; padding: 2px 3px 0 0; color: #c6c6c6; font-size: 12px; }

/* canvas */
.canvas-main { height: 943px; display: flex; flex: none; }
.ruler { width: 23px; padding-top: 17px; overflow: hidden; flex: none; }
.tick { height: 91px; text-align: right; font-size: 10px; color: #8c8c8c; font-family: "Liberation Sans", sans-serif; padding-right: 1px; position: relative; }
.tick::after { content: ""; position: absolute; right: 2px; top: 14px; width: 5px; height: 1px; background-color: #777; }
.viewport { flex: 1; min-width: 0; display: flex; flex-direction: column; margin-right: 4px; padding-bottom: 3px; }
.doc-tabs { height: 28px; flex: none; padding-top: 5px; }
.doc-tab { width: 170px; height: 23px; background-color: #3b3b3b; border-bottom: 2px solid #c8c8c8; display: flex; align-items: center; padding-left: 4px; }
.doc-logo { width: 13px; height: 17px; }
.doc-name { margin-left: 4px; font-size: 12.5px; letter-spacing: -.2px; color: #b8b8b8; font-family: "Liberation Sans", sans-serif; }
.doc-x { width: 7px; height: 7px; margin-left: auto; margin-right: 8px; color: #ccc; }
.doc-tools { height: 25px; flex: none; background-color: #333; border: 1px solid #555; border-bottom-width: 2px; display: flex; align-items: center; padding: 1px 13px 0 0; }
.dt-cell { width: 48px; height: 22px; border-right: 1px solid #4b4b4b; display: flex; align-items: center; justify-content: center; gap: 2px; flex: none; }
.dt-a { width: 49px; }
.dt-ic { width: 16px; height: 20px; }
.dt-sm { width: 13px; height: 15px; }
.dt-grid { width: 24px; height: 21px; }
.dt-solo { margin-left: 11px; font-family: "Liberation Sans", sans-serif; color: #b4b4b4; }
.dt-pen { width: 14px; height: 15px; margin-left: auto; }
.stage { flex: 1; min-height: 0; background-color: #1e1e1e; padding: 12px 0; display: flex; justify-content: center; }
.artboard { width: 419px; background-color: #fff; }
.stage-foot { height: 25px; flex: none; background-color: #333; border: 1px solid #4b4b4b; border-left: 0; border-right: 0; border-bottom-color: #666; display: flex; align-items: center; padding-left: 5px; color: #a0a0a0; }
.sf-ic { width: 15px; height: 13px; margin-right: 9px; }
.sf-tall { height: 17px; width: 14px; }
.sf-wide { width: 20px; height: 18px; }
.sf-ring { width: 14px; height: 19px; margin-left: auto; }
.sf-chev { width: 7px; height: 4px; margin-left: 9px; }
.sf-sep { width: 1px; height: 20px; background-color: #4b4b4b; margin: 0 8px; }
.sf-play { width: 13px; height: 21px; }
.sf-chev2 { margin-left: 11px; margin-right: 6px; }

.zoom-row { flex: 1; display: flex; align-items: center; padding-left: 21px; color: #a6a6a6; }
.swatch { width: 23px; height: 25px; background-color: #fff; border: 1px solid #111; flex: none; }
.zoom-val { width: 51px; height: 24px; margin-left: 2px; border: 1px solid #4b4b4b; text-align: right; padding: 4px 3px 0 0; font-size: 12px; }
.zoom-pct { margin-left: 2px; }
.z-minus { width: 12px; height: 14px; margin-left: 16px; }
.z-slider { width: 53px; height: 2px; margin-left: 17px; background-color: #666; position: relative; }
.z-slider span { position: absolute; left: 3px; top: -6px; width: 13px; height: 13px; border-radius: 50%; background-color: #b0b0b0; }
.z-plus { width: 12px; height: 14px; margin-left: 17px; }
.z-11 { margin-left: 21px; width: 18px; font-weight: bold; font-size: 11px; }
.z-fit { width: 19px; height: 19px; margin-left: 7px; }
.z-cross { width: 17px; height: 16px; margin-left: 7px; }
.z-flip { width: 18px; height: 17px; margin-left: 9px; }
.z-blend { width: 19px; height: 14px; margin-left: 28px; }
.z-chev { width: 7px; height: 4px; margin-left: 6px; }
.z-layout { width: 15px; height: 19px; margin-left: auto; }
.z-chev2 { margin-left: 5px; margin-right: 7px; }

/* status */
.statusbar { height: 20px; margin-top: 2px; background-color: #333; display: flex; align-items: center; justify-content: flex-end; flex: none; padding-right: 5px; color: #b4b4b4; }
.coords { white-space: pre; font-size: 11px; margin-right: 13px; }
.st-mem { width: 13px; height: 14px; margin-right: 6px; color: #aaa; }
.mem { width: 78px; text-align: right; font-size: 10px; color: #a0a0a0; background-color: #3f3f3f; height: 10px; line-height: 10px; letter-spacing: -.3px; }

/* dialogs */
.dialog { position: absolute; background-color: #333; border: 1px solid #4b4b4b; border-radius: 8px 8px 0 0; display: flex; flex-direction: column; box-shadow: 0 0 24px rgba(0, 0, 0, .35); overflow: hidden; }
.dlg-title { height: 29px; flex: none; background-color: #1e1e1e; display: flex; align-items: center; padding: 0 16px 0 8px; }
.dlg-name { margin-left: 8px; color: #b8b8b8; }
.dlg-check .dlg-name { font-size: 11px; letter-spacing: -.7px; }
.dlg-multi .dlg-name { font-size: 11px; letter-spacing: -.5px; }
.dlg-x { width: 12px; height: 12px; margin-left: auto; color: #bdbdbd; }
.dlg-foot { flex: none; display: flex; justify-content: center; gap: 6px; }
.btn { width: 72px; height: 22px; background-color: #3c3c3c; border: 1px solid #4b4b4b; border-radius: 2px; display: flex; align-items: center; justify-content: center; font-family: "Liberation Sans", sans-serif; color: #c0c0c0; }
.btn-dim { background-color: #333; color: #8c8c8c; }

.fs { margin: 0; min-width: 0; border: 1px solid #4d4d4d; padding: 0; }
.fs legend { padding: 0 2px; margin-left: 1px; line-height: 14px; color: #bdbdbd; }

.dlg-interp { left: 696px; top: 188px; width: 201px; height: 300px; }
.interp-body { padding: 16px 12px 0; }
.fs-method { height: 42px; padding: 0 2px; }
.sel-interp { height: 24px; margin-top: 2px; }
.fs-adjust { margin-top: 10px; height: 120px; padding: 0 2px; }
.adj-row { display: flex; align-items: center; gap: 4px; height: 26px; margin-top: -1px; }
.adj-lbl { width: 25px; padding-left: 1px; }
.sel-points { flex: 1; height: 22px; background-color: #333; }
.adj-rate { margin-top: 0; }
.rate-val { width: 50px; height: 20px; background-color: #444; text-align: right; padding: 3px 2px 0 0; margin-top: 6px; color: #aaa; }

.dlg-check { left: 1049px; top: 157px; width: 762px; height: 566px; }
.check-body { flex: 1; border-top: 1px solid #555; display: flex; flex-direction: column; padding: 13px 21px 0 15px; }
.check-opt { display: flex; align-items: center; gap: 3px; height: 16px; font-size: 11px; }
.check-lbl { letter-spacing: -.5px; }
.check-table { height: 384px; margin: 7px 0 0 6px; background-color: #292929; border: 1px solid #4b4b4b; }
.ct-head { height: 25px; display: grid; grid-template-columns: 58px 95px repeat(6, 1fr); border-bottom: 1px solid #4b4b4b; }
.ct-head span { display: flex; align-items: center; justify-content: center; border-right: 1px solid #4b4b4b; white-space: nowrap; color: #c0c0c0; font-size: 11px; letter-spacing: -.5px; }
.ct-head span:last-child { border-right: 0; }
.check-note { margin: 6px 0 0 84px; white-space: nowrap; color: #bdbdbd; font-size: 11px; }
.note-2 { margin-top: 30px; letter-spacing: -.3px; }
.check-foot { height: 38px; border-top: 1px solid #252525; padding: 8px 0 0 305px; justify-content: flex-start; }

.dlg-multi { left: 342px; top: 342px; width: 806px; height: 569px; border-radius: 8px; }
.dlg-multi .dlg-title { padding-bottom: 2px; }
.multi-body { flex: 1; min-height: 0; border-top: 1px solid #555; padding: 1px 3px 5px 5px; display: flex; gap: 4px; }
.fs-range { width: 396px; padding: 3px 2px 2px; display: flex; flex-direction: column; }
.all-btn { width: 94px; height: 22px; background-color: #3b3b3b; border: 1px solid #2f4d78; border-radius: 2px; display: flex; align-items: center; justify-content: center; flex: none; }
.range-list { flex: 1; min-height: 0; display: flex; border: 1px solid #4b4b4b; }
.range-rows { flex: 1; }
.range-row { height: 26px; background-color: #2a2a2a; display: flex; align-items: center; padding-left: 8px; }
.range-name { margin-left: 13px; width: 60px; color: #c6c6c6; flex: none; }
.keys { width: 224px; margin-left: 6px; height: 12px; display: flex; justify-content: space-between; align-items: center; position: relative; }
.keys::before { content: ""; position: absolute; left: 6px; right: 6px; top: 5.500px; height: 1px; background-color: #8a8a8a; }
.key { width: 12px; height: 12px; border-radius: 50%; background-color: #58a2b8; border: 2px solid #ef6234; position: relative; }

.fs-content { width: 396px; padding: 2px 4px 3px 7px; }
.fs-content > legend { margin-left: -4px; }
.opt-row { height: 26px; display: flex; align-items: center; white-space: nowrap; color: #a8a8a8; }
.opt-row:first-of-type { height: 27px; }
.opt-last { margin-bottom: 1px; }
.opt-lbl { margin-left: 5px; flex: none; }
.r-kana { font-size: 11px; letter-spacing: -.8px; }
.w39 { width: 39px; }
.w47 { width: 47px; }
.w50 { width: 50px; }
.w51 { width: 51px; }
.w52 { width: 52px; }
.w53 { width: 53px; }
.w54 { width: 54px; }
.w56 { width: 56px; }
.w57 { width: 57px; }
.w58 { width: 58px; }
.radio-item { display: flex; align-items: center; flex: none; }
.radio { width: 14px; height: 14px; margin-right: 5px; border: 1px solid #484848; border-radius: 50%; flex: none; position: relative; }
.radio-on::after { content: ""; position: absolute; left: 4px; top: 4px; width: 4px; height: 4px; border-radius: 50%; background-color: #8a8a8a; }
.num-box { height: 22px; background-color: #3f3f3f; border: 1px solid #4b4b4b; text-align: right; padding: 4px 2px 0 0; flex: none; }
.spin { width: 22px; height: 22px; margin-left: 1px; border: 1px solid #4b4b4b; border-radius: 2px; display: flex; align-items: center; justify-content: center; }
.pct { margin-left: 2px; }

.fs-hint { margin-left: -2px; width: 385px; height: 371px; padding: 0 2px; }
.fs-hint > legend { margin-left: 0; letter-spacing: -.6px; }
.hint-count { margin-top: 5px; color: #bdbdbd; font-size: 11px; }
.fs-before { height: 13px; margin: 1px 3px 0 1px; }
.fs-before legend { margin-left: 4px; letter-spacing: -.4px; }
.obj-cols { display: flex; gap: 2px; margin-top: 9px; }
.obj-col { width: 189px; }
.obj-col:first-child { width: 188px; }
.obj-lbl { color: #bdbdbd; line-height: 14px; font-size: 11px; letter-spacing: -.5px; }
.obj-list { height: 293px; margin-top: 1px; display: flex; border: 2px solid #4b4b4b; border-width: 2px 1px 1px 2px; }
.obj-items { flex: 1; padding: 3px 6px; color: #bdbdbd; }

.multi-foot { height: 36px; border-top: 1px solid #252525; padding-top: 5px; justify-content: flex-start; padding-left: 327px; }
```
